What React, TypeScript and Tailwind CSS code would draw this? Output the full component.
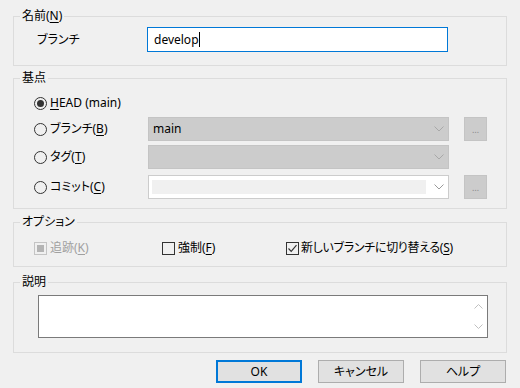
import React from 'react'

const font = "font-['Segoe_UI','Noto_Sans','Noto_Sans_CJK_JP',sans-serif] [font-feature-settings:'palt']"

const U = ({ children }: { children: React.ReactNode }) => (
    <span className='underline underline-offset-[2px] decoration-1'>{children}</span>
)

const Radio = ({ checked = false }: { checked?: boolean }) => (
    <span className='grid place-items-center w-[13px] h-[13px] rounded-full border border-[#333333] shrink-0'>
        {checked && <span className='w-[7px] h-[7px] rounded-full bg-[#333333]' />}
    </span>
)

const Chevron = ({ color }: { color: string }) => (
    <svg width="10" height="6" viewBox="0 0 10 6" fill="none">
        <polyline points="0.5,0.5 5,5 9.5,0.5" stroke={color} strokeWidth="1" />
    </svg>
)

const Group = ({ title, className, children }: { title: React.ReactNode; className?: string; children: React.ReactNode }) => (
    <fieldset className={`border border-[#dcdcdc] px-0 ${className ?? ''}`}>
        <legend className='ml-[6px] px-[2px] h-[16px] leading-[16px] text-[12px] text-black'>{title}</legend>
        {children}
    </fieldset>
)

const DotsButton = () => (
    <div className='ml-[15px] w-[23px] h-[24px] bg-[#cccccc] border border-[#c4c4c4] flex items-center justify-center text-[9px] text-[#8a8a8a] leading-none'>…</div>
)

const App = () => {
    return (
        <div className={`w-[520px] h-[388px] bg-[#f0f0f0] px-[13px] pt-[8px] overflow-hidden text-[12px] text-black ${font}`}>

            {/* name */}
            <Group title={<>名前(<U>N</U>)</>} className='pb-[13px]'>
                <div className='flex items-center mt-[3px]'>
                    <p className='w-[133px] pl-[23px]'>ブランチ</p>
                    <div className='w-[301px] h-[25px] bg-white border border-[#0078d7] flex items-center pl-[6px]'>
                        <span>develop</span>
                        <span className='w-px h-[15px] bg-black' />
                    </div>
                </div>
            </Group>

            {/* base point */}
            <Group title='基点' className='mt-[4px] pb-[9px]'>
                <div className='flex items-center h-[24px] mt-[5px] pl-[20px] gap-[3px]'>
                    <Radio checked />
                    <span><U>H</U>EAD (main)</span>
                </div>

                <div className='flex items-center h-[24px] mt-[2px]'>
                    <div className='w-[134px] pl-[20px] flex items-center gap-[3px]'>
                        <Radio />
                        <span>ブランチ(<U>B</U>)</span>
                    </div>
                    <div className='w-[301px] h-[24px] bg-[#cccccc] border border-[#c4c4c4] flex items-center justify-between px-[4px]'>
                        <span>main</span>
                        <Chevron color='#a8a8a8' />
                    </div>
                    <DotsButton />
                </div>

                <div className='flex items-center h-[24px] mt-[4px]'>
                    <div className='w-[134px] pl-[20px] flex items-center gap-[3px]'>
                        <Radio />
                        <span>タグ(<U>T</U>)</span>
                    </div>
                    <div className='w-[301px] h-[24px] bg-[#cccccc] border border-[#c4c4c4] flex items-center justify-end pr-[4px]'>
                        <Chevron color='#a8a8a8' />
                    </div>
                </div>

                <div className='flex items-center h-[24px] mt-[6px]'>
                    <div className='w-[134px] pl-[20px] flex items-center gap-[3px]'>
                        <Radio />
                        <span>コミット(<U>C</U>)</span>
                    </div>
                    <div className='w-[301px] h-[24px] bg-white border border-[#cccccc] flex items-center pl-[3px] pr-[4px] gap-[8px]'>
                        <div className='flex-1 h-[14px] bg-[#f0f0f0]' />
                        <Chevron color='#9a9a9a' />
                    </div>
                    <DotsButton />
                </div>
            </Group>

            {/* options */}
            <Group title='オプション' className='mt-[5px] pb-[8px]'>
                <div className='flex items-center h-[20px] mt-[8px]'>
                    <div className='w-[148px] pl-[20px] flex items-center gap-[3px] text-[#a0a0a0]'>
                        <span className='w-[13px] h-[13px] border border-[#c4c4c4] grid place-items-center'>
                            <span className='w-[7px] h-[7px] bg-[#b4b4b4]' />
                        </span>
                        <span>追跡(<U>K</U>)</span>
                    </div>
                    <div className='w-[124px] flex items-center gap-[3px]'>
                        <span className='w-[13px] h-[13px] border border-[#333333]' />
                        <span>強制(<U>F</U>)</span>
                    </div>
                    <div className='flex items-center gap-[2px] tracking-[-0.3px]'>
                        <span className='w-[13px] h-[13px] border border-[#333333] grid place-items-center'>
                            <svg width="11" height="11" viewBox="0 0 11 11" fill="none">
                                <polyline points="1.5,5.5 4.2,8.3 9.5,2.2" stroke="#333333" strokeWidth="1.2" />
                            </svg>
                        </span>
                        <span>新しいブランチに切り替える(<U>S</U>)</span>
                    </div>
                </div>
            </Group>

            {/* description */}
            <Group title='説明' className='mt-[7px] pb-[14px]'>
                <div className='mt-[5px] ml-[24px] w-[450px] h-[43px] bg-white border border-[#7a7a7a] flex justify-end'>
                    <div className='w-[17px] flex flex-col items-center justify-between py-[8px]'>
                        <svg width="9" height="5" viewBox="0 0 9 5" fill="none">
                            <polyline points="0.5,4.5 4.5,0.5 8.5,4.5" stroke="#c0c0c0" strokeWidth="1" />
                        </svg>
                        <svg width="9" height="5" viewBox="0 0 9 5" fill="none">
                            <polyline points="0.5,0.5 4.5,4.5 8.5,0.5" stroke="#c0c0c0" strokeWidth="1" />
                        </svg>
                    </div>
                </div>
            </Group>

            {/* buttons */}
            <div className='flex justify-end gap-[16px] mt-[7px] pr-[1px]'>
                <button className='w-[86px] h-[23px] bg-[#e1e1e1] border-2 border-[#0078d7]'>OK</button>
                <button className='w-[86px] h-[23px] bg-[#e1e1e1] border border-[#adadad]'>キャンセル</button>
                <button className='w-[86px] h-[23px] bg-[#e1e1e1] border border-[#adadad]'>ヘルプ</button>
            </div>
        </div>
    )
}

export default App
